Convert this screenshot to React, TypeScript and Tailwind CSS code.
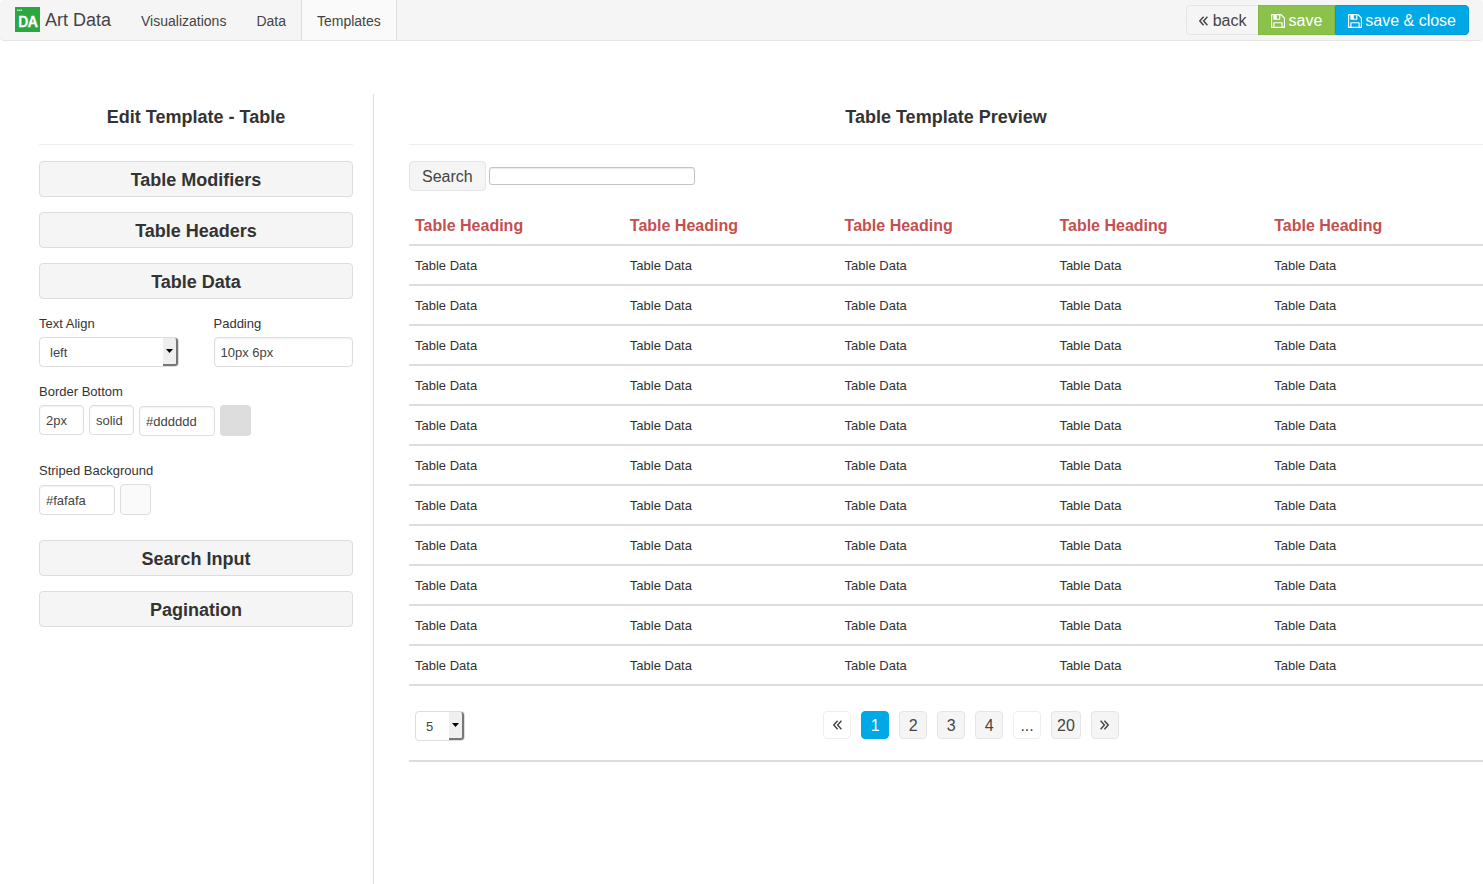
import type { ReactElement, ReactNode } from 'react';

const HEADINGS = [1, 2, 3, 4, 5];
const ROWS = [1, 2, 3, 4, 5, 6, 7, 8, 9, 10, 11];

const fieldClass =
  'h-[30px] rounded-[4px] border border-[#dddddd] bg-white px-1.5 text-[13px] text-[#444444] shadow-[inset_0_1px_2px_rgba(0,0,0,0.06)]';

function Logo(): ReactElement {
  return (
    <svg viewBox="0 0 25 25" className="size-[25px]" aria-hidden="true">
      <rect width="25" height="25" fill="#2ba640" />
      <path d="M2 3.3h5" stroke="#bfe6c6" strokeWidth="1.4" strokeDasharray="1.4 .4" />
      <text
        x="13"
        y="20"
        textAnchor="middle"
        fill="#ffffff"
        stroke="#ffffff"
        strokeWidth="0.3"
        fontFamily="Inter, sans-serif"
        fontWeight="600"
        fontSize="14"
      >
        DA
      </text>
    </svg>
  );
}

function SaveIcon(): ReactElement {
  return (
    <svg viewBox="0 0 1536 1536" className="size-[14px]" fill="currentColor" aria-hidden="true">
      <path d="M384 1408h768v-384h-768v384zm896 0h128v-896q0-14-10-38.5t-20-34.5l-281-281q-10-10-34-20t-39-10v416q0 40-28 68t-68 28h-576q-40 0-68-28t-28-68v-416h-128v1280h128v-416q0-40 28-68t68-28h832q40 0 68 28t28 68v416zm-384-928v-320q0-13-9.5-22.5t-22.5-9.5h-192q-13 0-22.5 9.5t-9.5 22.5v320q0 13 9.5 22.5t22.5 9.5h192q13 0 22.5-9.5t9.5-22.5zm640 32v928q0 40-28 68t-68 28h-1344q-40 0-68-28t-28-68v-1344q0-40 28-68t68-28h928q40 0 88 20t76 48l280 280q28 28 48 76t20 88z" />
    </svg>
  );
}

function DoubleAngle({ flip = false }: { flip?: boolean }): ReactElement {
  return (
    <svg
      viewBox="0 0 9 10"
      className="h-2.5 w-[9px]"
      fill="none"
      stroke="currentColor"
      strokeWidth="1.4"
      aria-hidden="true"
    >
      <path d={flip ? 'M.6 .8 4.4 5 .6 9.2M4.4 .8 8.2 5 4.4 9.2' : 'M4.6 .8 .8 5l3.8 4.2M8.4 .8 4.6 5l3.8 4.2'} />
    </svg>
  );
}

function NavLink({ children, active = false }: { children: ReactNode; active?: boolean }): ReactElement {
  return (
    <a
      href="#"
      className={
        active
          ? 'flex h-10 items-center border-x border-[#dddddd] bg-[#fafafa] px-[15px] pt-0.5 text-sm text-[#444444]'
          : 'flex h-10 items-center px-[15px] pt-0.5 text-sm text-[#444444]'
      }
    >
      {children}
    </a>
  );
}

function SectionButton({ children }: { children: ReactNode }): ReactElement {
  return (
    <button
      type="button"
      className="block h-9 w-full rounded-[4px] border border-[#dddddd] bg-[#f5f5f5] pt-0.5 text-center text-lg font-bold text-[#333333]"
    >
      {children}
    </button>
  );
}

type SelectBoxProps = { id: string; label: string; value: string; className: string };

function SelectBox({ id, label, value, className }: SelectBoxProps): ReactElement {
  return (
    <span className={`relative block h-[30px] ${className}`}>
      <select
        id={id}
        aria-label={label}
        defaultValue={value}
        className="h-[30px] w-full appearance-none rounded-[4px] border border-[#dddddd] bg-white pt-0.5 pl-2.5 text-[13px] text-[#444444]"
      >
        <option>{value}</option>
      </select>
      <span className="pointer-events-none absolute inset-y-px right-px flex w-[15px] items-center justify-center rounded-r-[3px] border-r-2 border-b-2 border-[#777777] bg-[#efefef]">
        <svg viewBox="0 0 7 4" className="h-1 w-[7px]" aria-hidden="true">
          <path d="M0 0h7L3.5 4z" fill="#000000" />
        </svg>
      </span>
    </span>
  );
}

function PanelTitle({ children }: { children: ReactNode }): ReactElement {
  return (
    <h2 className="flex h-[51px] items-center justify-center border-b border-[#eeeeee] pb-1 text-lg font-bold text-[#333333]">
      {children}
    </h2>
  );
}

function Sidebar(): ReactElement {
  return (
    <aside className="w-[374px] shrink-0 border-r border-[#dddddd] pr-5 pl-[39px]">
      <PanelTitle>Edit Template - Table</PanelTitle>
      <div className="mt-4 flex flex-col gap-[15px]">
        <SectionButton>Table Modifiers</SectionButton>
        <SectionButton>Table Headers</SectionButton>
        <SectionButton>Table Data</SectionButton>
      </div>

      <div className="mt-[15px] grid grid-cols-2 gap-x-[35px] text-[13px] leading-5">
        <label htmlFor="text-align">Text Align</label>
        <label htmlFor="padding">Padding</label>
        <SelectBox id="text-align" label="Text Align" value="left" className="mt-[3px] w-full" />
        <input id="padding" defaultValue="10px 6px" className={`mt-[3px] w-full ${fieldClass}`} />
      </div>

      <div className="mt-[15px] text-[13px] leading-5">
        <label htmlFor="border-width" className="block">
          Border Bottom
        </label>
        <div className="mt-[3px] flex items-start gap-[5px]">
          <input id="border-width" defaultValue="2px" className={`w-[45px] ${fieldClass}`} />
          <input aria-label="Border style" defaultValue="solid" className={`w-[45px] ${fieldClass}`} />
          <div className="flex items-end gap-[5px]">
            <input aria-label="Border color" defaultValue="#dddddd" className={`w-[76px] ${fieldClass}`} />
            <button type="button" aria-label="Pick border color" className="size-[31px] rounded-[4px] bg-[#dddddd]" />
          </div>
        </div>
      </div>

      <div className="mt-[25px] text-[13px] leading-5">
        <label htmlFor="stripe" className="block">
          Striped Background
        </label>
        <div className="mt-[3px] flex items-end gap-[5px]">
          <input id="stripe" defaultValue="#fafafa" className={`w-[76px] ${fieldClass}`} />
          <button
            type="button"
            aria-label="Pick stripe color"
            className="size-[31px] rounded-[4px] border border-[#dddddd] bg-[#fafafa]"
          />
        </div>
      </div>

      <div className="mt-[25px] flex flex-col gap-[15px]">
        <SectionButton>Search Input</SectionButton>
        <SectionButton>Pagination</SectionButton>
      </div>
    </aside>
  );
}

function Pagination(): ReactElement {
  const box = 'flex h-7 min-w-7 items-center justify-center rounded-[4px] border px-[5px] text-base';
  return (
    <nav aria-label="Pages" className="flex flex-1 justify-center gap-2.5 text-[#444444]">
      <span className={`${box} border-[#eeeeee]`}>
        <DoubleAngle />
      </span>
      <span className={`${box} border-[#00a8e6] bg-[#00a8e6] pt-0.5 text-white`}>1</span>
      {['2', '3', '4'].map((page) => (
        <a key={page} href="#" className={`${box} border-[#e5e5e5] bg-[#f5f5f5] pt-0.5`}>
          {page}
        </a>
      ))}
      <span className={`${box} border-[#eeeeee] pt-0.5`}>...</span>
      <a href="#" className={`${box} border-[#e5e5e5] bg-[#f5f5f5] pt-0.5`}>
        20
      </a>
      <a href="#" aria-label="Next" className={`${box} border-[#e5e5e5] bg-[#f5f5f5]`}>
        <DoubleAngle flip />
      </a>
    </nav>
  );
}

function Preview(): ReactElement {
  return (
    <main className="ml-[35px] min-w-0 flex-1">
      <PanelTitle>Table Template Preview</PanelTitle>
      <form className="mt-4 flex items-center gap-[3px]">
        <button
          type="button"
          className="flex h-[30px] items-center rounded-[4px] border border-[#e5e5e5] bg-[#f5f5f5] px-3 pt-0.5 text-base text-[#444444]"
        >
          Search
        </button>
        <input
          type="text"
          aria-label="Search"
          className="h-[18px] w-[206px] rounded-[3px] border border-[#c4c4c4] bg-white px-1 text-[13px] shadow-[inset_0_1px_1px_rgba(0,0,0,0.08)]"
        />
      </form>

      <table className="mt-[14px] w-full table-fixed border-collapse text-left">
        <thead>
          <tr className="h-10 border-b-2 border-[#dddddd]">
            {HEADINGS.map((n) => (
              <th key={n} className="px-1.5 pt-0.5 text-base font-bold text-[#c44f4f]">
                Table Heading
              </th>
            ))}
          </tr>
        </thead>
        <tbody>
          {ROWS.map((row) => (
            <tr key={row} className="h-10 border-b-2 border-[#dddddd]">
              {HEADINGS.map((n) => (
                <td key={n} className="px-1.5 pt-0.5 text-[13px] leading-5 text-[#333333]">
                  Table Data
                </td>
              ))}
            </tr>
          ))}
        </tbody>
      </table>

      <div className="flex border-b-2 border-[#dddddd] px-1.5 pt-[25px] pb-[19px]">
        <SelectBox id="page-size" label="Rows per page" value="5" className="w-[50px]" />
        <Pagination />
      </div>
    </main>
  );
}

export default function App(): ReactElement {
  return (
    <div className="flex min-h-screen flex-col bg-white font-['Liberation_Sans',Arial,sans-serif] text-[#333333]">
      <header className="flex h-[41px] shrink-0 items-start justify-between rounded-[4px] border-b border-[#e5e5e5] bg-[#f5f5f5] px-[14px]">
        <div className="flex">
          <a href="#" className="mr-[15px] flex h-[39px] items-center gap-[5px] pl-px text-lg text-[#444444]">
            <Logo />
            <span>Art Data</span>
          </a>
          <nav className="flex">
            <NavLink>Visualizations</NavLink>
            <NavLink>Data</NavLink>
            <NavLink active>Templates</NavLink>
          </nav>
        </div>
        <div className="mt-[5px] flex h-[30px] text-base">
          <button
            type="button"
            className="flex items-center gap-[5px] rounded-l-[4px] border border-r-0 border-[#e5e5e5] bg-[#f5f5f5] px-3 pt-0.5 text-[#444444]"
          >
            <DoubleAngle />
            back
          </button>
          <button
            type="button"
            className="flex items-center gap-[3px] border border-[#82bb42] bg-[#8cc14c] px-3 pt-0.5 text-white"
          >
            <SaveIcon />
            save
          </button>
          <button
            type="button"
            className="flex items-center gap-[3px] rounded-r-[4px] border border-[#0099d9] bg-[#00a8e6] px-3 pt-0.5 text-white"
          >
            <SaveIcon />
            save &amp; close
          </button>
        </div>
      </header>

      <div className="mt-[53px] flex flex-1">
        <Sidebar />
        <Preview />
      </div>
    </div>
  );
}
